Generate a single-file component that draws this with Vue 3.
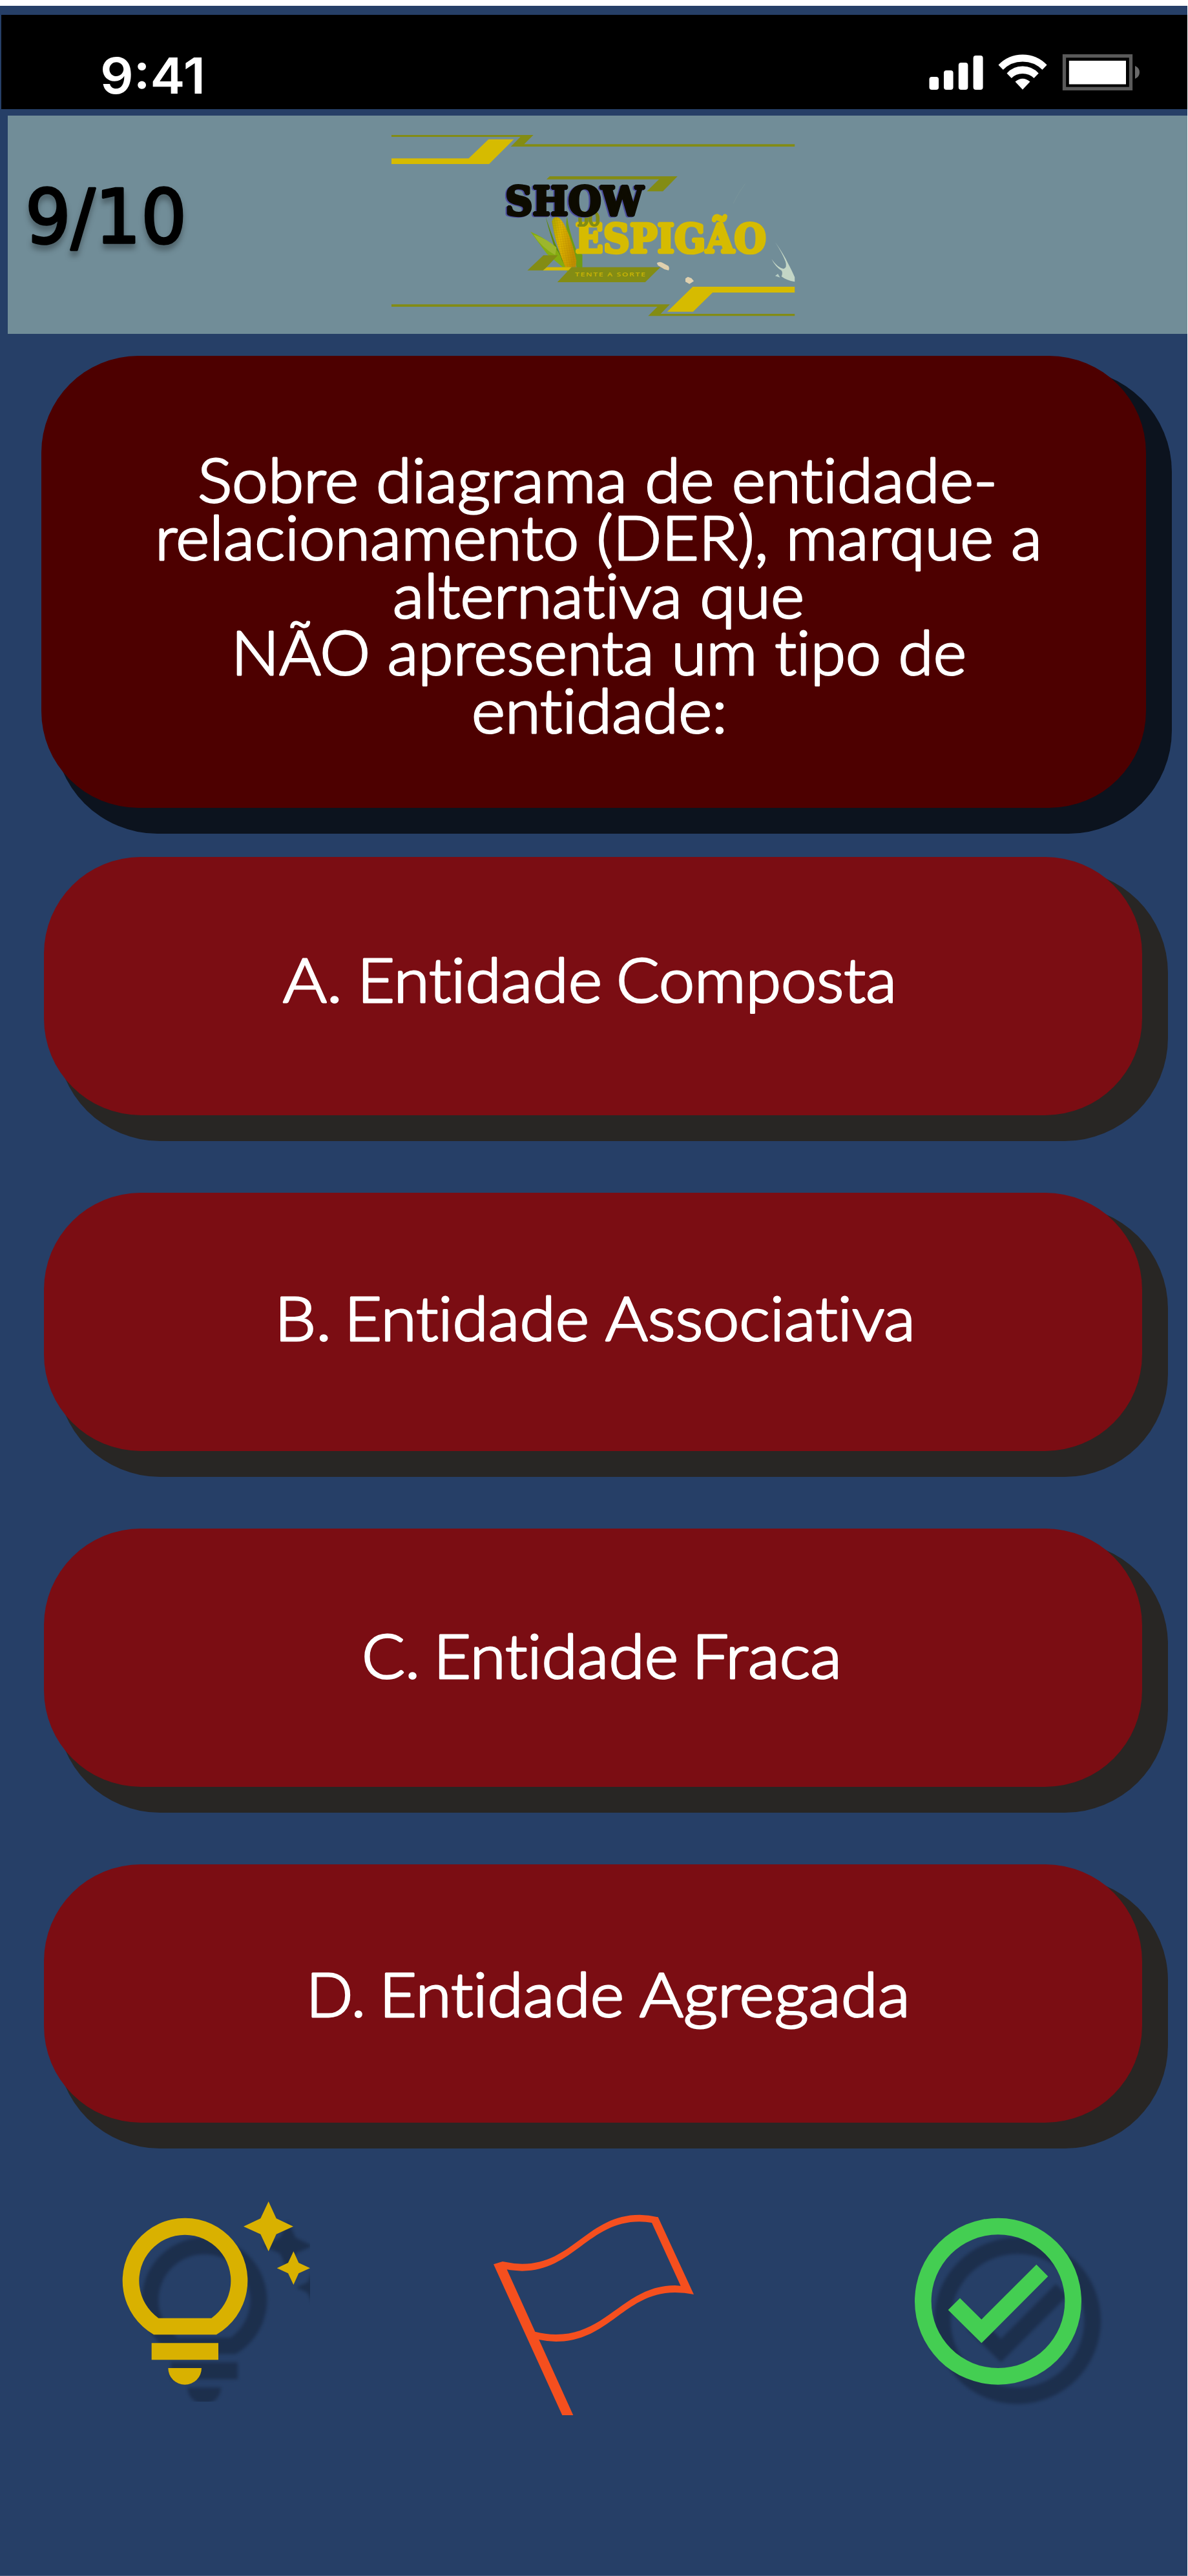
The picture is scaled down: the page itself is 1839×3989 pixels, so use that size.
<script setup>
const questionLines = [
  { text: 'Sobre diagrama de entidade-', x: 306, y: 778, w: 1238 },
  { text: 'relacionamento (DER), marque a', x: 240, y: 867, w: 1373 },
  { text: 'alternativa que', x: 608, y: 957, w: 637 },
  { text: 'NÃO apresenta um tipo de', x: 358, y: 1045, w: 1138 },
  { text: 'entidade:', x: 730, y: 1135, w: 396 },
]
const options = [
  {
    id: 'A',
    y: 225,
    words: [
      { text: 'A.', x: 438, w: 92 },
      { text: 'Entidade', x: 553, w: 379 },
      { text: 'Composta', x: 954, w: 434 },
    ],
  },
  {
    id: 'B',
    y: 229,
    words: [
      { text: 'B.', x: 425, w: 88 },
      { text: 'Entidade', x: 533, w: 379 },
      { text: 'Associativa', x: 937, w: 480 },
    ],
  },
  {
    id: 'C',
    y: 232,
    words: [
      { text: 'C.', x: 560, w: 90 },
      { text: 'Entidade', x: 671, w: 379 },
      { text: 'Fraca', x: 1071, w: 232 },
    ],
  },
  {
    id: 'D',
    y: 236,
    words: [
      { text: 'D.', x: 474, w: 92 },
      { text: 'Entidade', x: 587, w: 379 },
      { text: 'Agregada', x: 990, w: 419 },
    ],
  },
]
</script>

<template>
  <main class="screen">
    <div class="status">
      <svg class="clock" width="200" height="126" viewBox="0 0 200 126">
        <text x="4" y="98" font-size="77" textLength="163" lengthAdjust="spacingAndGlyphs">9:41</text>
      </svg>
      <svg class="indicators" width="330" height="60" viewBox="1438 82 330 60">
        <g fill="#fff">
          <rect x="1439.5" y="119" width="14.6" height="20" rx="4" />
          <rect x="1462" y="109" width="14.6" height="30" rx="4" />
          <rect x="1484.8" y="97" width="14.6" height="42" rx="4" />
          <rect x="1507.6" y="86" width="15" height="53" rx="4" />
          <path d="M1546.5 100.500Q1562 84.500 1584 84.500T1621.600 100.500L1614.500 108Q1602 95.500 1584 95.500T1553.800 108Z" />
          <path d="M1559.500 113.500Q1569 102.500 1584 102.500T1608.800 113.500L1601.500 121Q1594.500 114 1584 114T1566.800 121Z" />
          <path d="M1572.500 126.500Q1584 117 1595.500 126.500L1584 138.800Z" />
          <rect x="1655.800" y="94" width="88.200" height="36.500" />
        </g>
        <rect x="1648.500" y="86.700" width="103" height="50.600" fill="none" stroke="#5a5a5a" stroke-width="5.300" />
        <path d="M1758 102Q1765 105 1765 112T1758 122Z" fill="#6a6a6a" />
      </svg>
    </div>

    <header class="banner">
      <svg class="counter" width="300" height="190" viewBox="0 0 300 190">
        <text x="25" y="137" font-size="115" textLength="250" lengthAdjust="spacingAndGlyphs">9/10</text>
      </svg>
      <svg class="logo" width="660" height="320" viewBox="0 0 1568 960" preserveAspectRatio="none">
        <defs>
          <linearGradient id="cob" x1="0" x2="1" y1="0" y2="0.2">
            <stop offset="0" stop-color="#a8a800" />
            <stop offset="0.4" stop-color="#dcb400" />
            <stop offset="1" stop-color="#c08e00" />
          </linearGradient>
          <pattern id="grain" width="9" height="11" patternUnits="userSpaceOnUse" patternTransform="rotate(-8)">
            <path d="M0 0H9M0 0V11" stroke="#a87800" stroke-width="2" opacity="0.55" />
          </pattern>
        </defs>
        <g fill="#838c14">
          <path d="M38 57H560L526 100H1521V111H477L512 66H38Z" />
          <path d="M620 249H1090L1036 319H977L1022 263H608Z" />
          <path d="M38 844H1062L1028 888H1521V898H982L1016 855H38Z" />
        </g>
        <g fill="#d6bb00">
          <path d="M38 166H322L395 77H488L397 192H38Z" />
          <path d="M1521 762H1146L1052 878H1147L1219 789H1521Z" />
        </g>
        <path d="M605 437Q622 500 640 560L690 695L660 660Q620 520 605 437Z" fill="#5e8a0c" />
        <path d="M684 437Q672 500 700 560L722 690L740 671V612L720 600Q690 500 684 437Z" fill="#6f9c12" />
        <path d="M549 506Q575 550 610 610L690 695L665 640Q650 560 549 506Z" fill="#85ac10" />
        <path d="M560 520Q590 580 640 615L645 580Q610 540 560 520Z" fill="#9cb62c" />
        <path d="M628 460Q632 437 645 437Q662 440 680 490Q705 560 718 640L716 671H677Q640 560 628 460Z" fill="url(#cob)" />
        <path d="M628 460Q632 437 645 437Q662 440 680 490Q705 560 718 640L716 671H677Q640 560 628 460Z" fill="url(#grain)" />
        <path d="M597 616H650L597 686H538Z" fill="#838c14" />
        <path d="M610 671H703L691 686H595Z" fill="#d6bb00" />
        <path d="M700 671H1027L971 741H648Z" fill="#838c14" />
        <text class="tag" x="713" y="714" font-size="29" textLength="258" lengthAdjust="spacing">TENTE A SORTE</text>
        <text class="slab gold" x="714" y="604" font-size="186" textLength="702" lengthAdjust="spacingAndGlyphs">ESPIGÃO</text>
        <text class="slab olive" x="721" y="480" font-size="90" textLength="84" lengthAdjust="spacingAndGlyphs">DO</text>
        <text class="slab violet" x="452" y="433" font-size="186" textLength="508" lengthAdjust="spacingAndGlyphs">SHOW</text>
        <text class="slab ink" x="457" y="429" font-size="186" textLength="508" lengthAdjust="spacingAndGlyphs">SHOW</text>
        <g fill="#dfd0ae">
          <path d="M1014 652Q1022 644 1034 650L1056 665Q1062 676 1057 686L1042 681L1018 663Z" />
          <path d="M1119 724L1128 716L1141 722L1150 736L1134 749L1119 739Z" />
        </g>
        <path d="M1449 555Q1480 610 1495 650Q1512 690 1521 718V739Q1490 732 1472 714Q1478 700 1473 688Q1450 670 1436 634Q1458 674 1480 679Q1494 674 1487 645Q1475 605 1449 555Z" fill="#c3d6c6" />
        <path d="M1449 712L1459 702L1467 719Z" fill="#b6cdc4" />
        <path d="M1338 284L1314 330L1295 375" fill="none" stroke="#7f9a9c" stroke-width="1.500" />
      </svg>
    </header>

    <section class="card question">
      <svg class="copy" width="1710" height="700" viewBox="64 551 1710 700">
        <text v-for="l in questionLines" :key="l.y" :x="l.x" :y="l.y" :textLength="l.w" lengthAdjust="spacingAndGlyphs">{{ l.text }}</text>
      </svg>
    </section>

    <section class="options">
      <button v-for="o in options" :key="o.id" class="card option">
        <svg class="copy" width="1700" height="400" viewBox="68 0 1700 400">
          <text :y="o.y">
            <tspan v-for="w in o.words" :key="w.x" :x="w.x" :textLength="w.w" lengthAdjust="spacingAndGlyphs">{{ w.text }}</tspan>
          </text>
        </svg>
      </button>
    </section>

    <footer class="actions">
      <svg class="bulb" width="330" height="339" viewBox="0 0 990 1017">
        <defs>
          <g id="bulb-shape">
            <path fill-rule="evenodd" d="M264 706A290.500 290.500 0 1 1 555 706ZM286 629H532A213 213 0 1 0 286 629Z" />
            <path d="M254 745H564V823H254Z" />
            <path d="M331 861H486A77.500 77.500 0 0 1 331 861Z" />
            <path d="M797 87L833 166L912 203L833 239L797 319L760 239L681 203L760 166Z" />
            <path d="M913 319L937 372L990 397L937 421L913 474L888 421L836 397L888 372Z" />
          </g>
        </defs>
        <use class="shade" href="#bulb-shape" x="90" y="90" />
        <use href="#bulb-shape" fill="#d9b100" />
      </svg>
      <svg class="flag" width="360" height="400" viewBox="0 0 1080 1200">
        <path fill="#f54f1e" fill-rule="evenodd" d="M72 379L114 366Q160 376 205 377C440 377 510 149 750 149Q795 150 836 160L1002 519Q960 510 915 510C680 510 610 738 362 738Q320 737 283 729L442 1080H391ZM134 403L265 692Q310 704 362 705C600 705 680 477 915 477L941 479L807 186Q780 181 750 181C515 181 440 410 205 410Q165 409 134 403Z" />
      </svg>
      <svg class="check" width="400" height="400" viewBox="0 0 1200 1200">
        <defs>
          <g id="check-shape">
            <path fill-rule="evenodd" d="M108 551A387 387 0 1 1 882 551A387 387 0 1 1 108 551ZM185 551A310 310 0 1 0 805 551A310 310 0 1 0 185 551Z" />
            <path d="M263 591L318 536L418 635L673 380L727 435L418 745Z" />
          </g>
        </defs>
        <use class="shade" href="#check-shape" x="90" y="90" />
        <use href="#check-shape" fill="#44ce52" />
      </svg>
    </footer>
  </main>
</template>

<style>
body {
  margin: 0;
  background: #fff;
}
</style>

<style scoped>
.screen {
  box-sizing: border-box;
  width: 1838px;
  height: 3989px;
  border-top: 9px solid #fff;
  border-bottom: 1px solid #4b5f80;
  padding-top: 14px;
  background: #263f67;
  overflow: hidden;
}
svg {
  display: block;
  flex: none;
}
.status {
  display: flex;
  justify-content: space-between;
  align-items: flex-start;
  width: 1836px;
  height: 146px;
  margin-left: 2px;
  background: #000;
}
.clock {
  margin: 24px 0 0 149px;
}
.clock text {
  font-family: Inter, "Liberation Sans", sans-serif;
  font-weight: 600;
  fill: #fff;
}
.indicators {
  margin: 59px 71px 0 0;
}
.banner {
  display: flex;
  height: 338px;
  margin: 10px 0 0 12px;
  background: #718d98;
}
.counter {
  margin: 60px 0 0 2px;
}
.counter text {
  font-family: "DejaVu Sans", sans-serif;
  fill: #000;
  stroke: #000;
  stroke-width: 3.5px;
  stroke-linejoin: round;
  filter: drop-shadow(0 8px 4px rgba(0, 0, 0, 0.3));
}
.logo {
  margin: 11px 0 0 276px;
}
.slab {
  font-family: "DejaVu Serif", serif;
  font-weight: 700;
  stroke-width: 14px;
  stroke-linejoin: bevel;
}
.gold {
  fill: #d6bb00;
  stroke: #d6bb00;
}
.olive {
  fill: #838c14;
  stroke: #838c14;
  stroke-width: 6px;
}
.violet {
  fill: #4d4fa0;
  stroke: #4d4fa0;
}
.ink {
  fill: #0d0b00;
  stroke: #0d0b00;
}
.tag {
  font-family: "Open Sans", sans-serif;
  font-weight: 600;
  fill: #c9b403;
}
.card {
  display: block;
  padding: 0;
  border: 0;
  border-radius: 150px;
}
.question {
  width: 1710px;
  height: 700px;
  margin: 34px 0 0 64px;
  background: #4d0000;
  box-shadow: 30px 30px 0 10px #0c131e;
}
.copy text {
  font-family: Lato, "Open Sans", sans-serif;
  font-size: 95px;
  font-weight: 300;
  font-variant-ligatures: none;
  fill: #fff;
  stroke: #fff;
  stroke-width: 3px;
  stroke-linejoin: round;
}
.options {
  display: flex;
  flex-direction: column;
  gap: 120px;
  margin: 76px 0 0 68px;
}
.option {
  width: 1700px;
  height: 400px;
  background: #7b0d13;
  box-shadow: 30px 30px 0 10px #282624;
}
.actions {
  display: flex;
  align-items: flex-start;
  margin-top: 93px;
}
.bulb {
  margin-left: 150px;
}
.flag {
  margin-left: 260px;
}
.check {
  margin-left: 280px;
}
.shade {
  fill: #000;
  opacity: 0.25;
  filter: blur(8px);
}
</style>
